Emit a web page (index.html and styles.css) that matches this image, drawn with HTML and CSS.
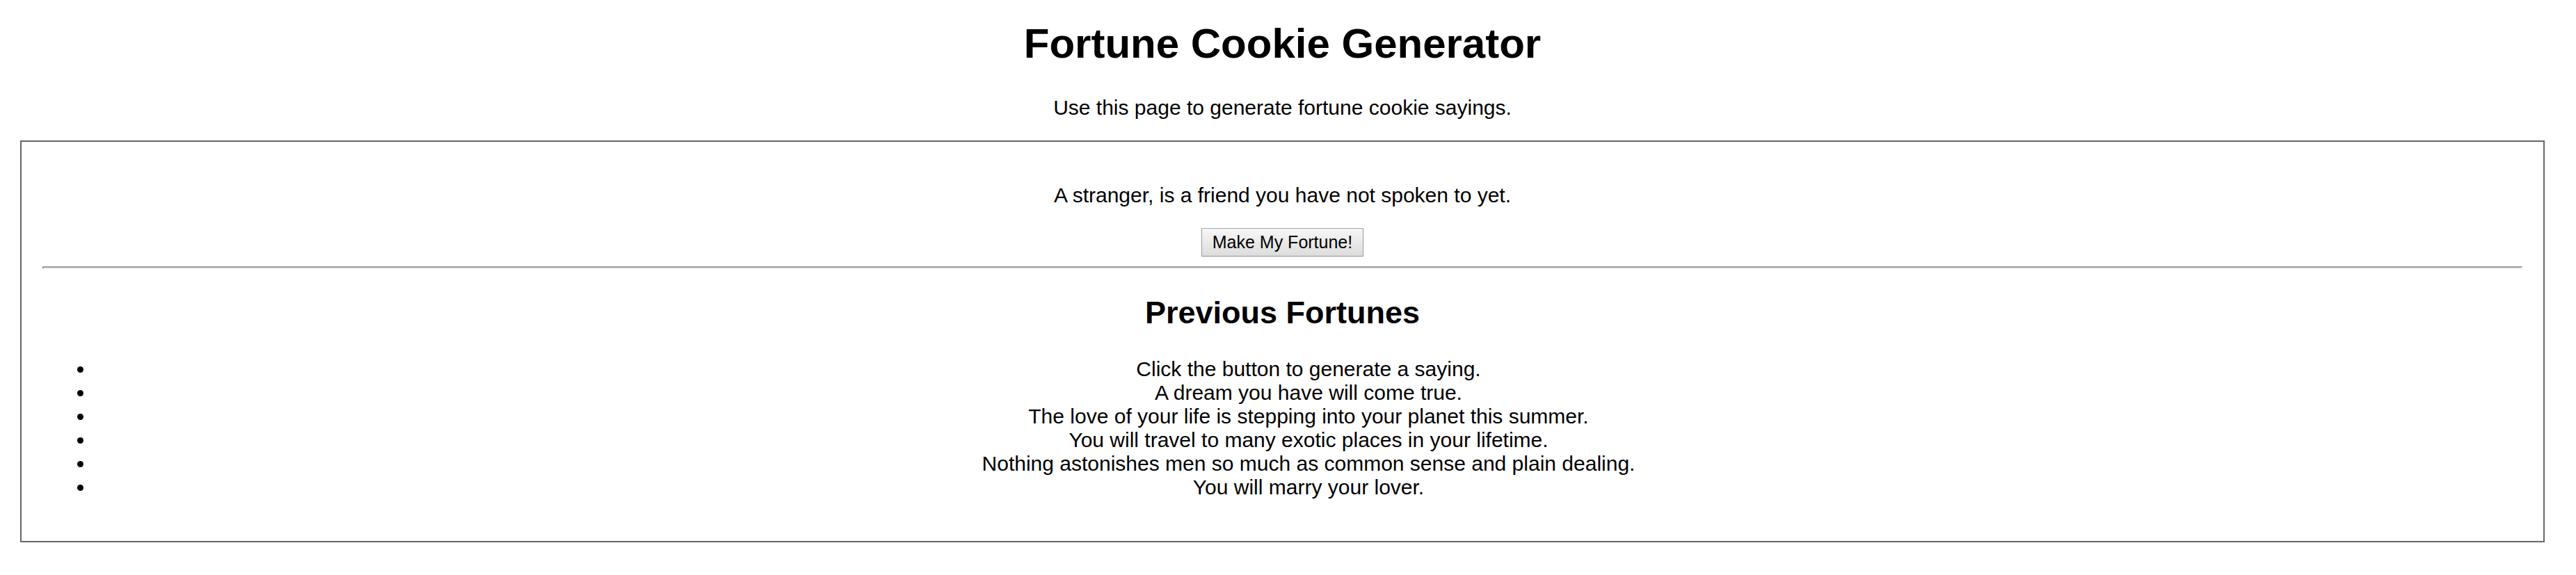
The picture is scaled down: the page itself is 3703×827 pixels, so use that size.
FILE: index.html
```
<!DOCTYPE html>
<html lang="en">
<head>
<meta charset="utf-8">
<title>Fortune Cookie Generator</title>
<link rel="stylesheet" href="styles.css">
</head>
<body>
<h1 class="title">Fortune Cookie Generator</h1>
<p class="intro">Use this page to generate fortune cookie sayings.</p>
<main class="panel">
<p class="fortune">A stranger, is a friend you have not spoken to yet.</p>
<button class="make-button" type="button">Make My Fortune!</button>
<hr class="divider">
<h2 class="subtitle">Previous Fortunes</h2>
<ul class="fortune-list">
<li>Click the button to generate a saying.</li>
<li>A dream you have will come true.</li>
<li>The love of your life is stepping into your planet this summer.</li>
<li>You will travel to many exotic places in your lifetime.</li>
<li>Nothing astonishes men so much as common sense and plain dealing.</li>
<li>You will marry your lover.</li>
</ul>
</main>
</body>
</html>
```
FILE: styles.css
```
body {
  margin: 0 45px 0 29px;
  font: 30px/34px "Liberation Sans", Arial, sans-serif;
  text-align: center;
  color: #000;
  background: #fff;
}
.title {
  margin: 28px 0 40px;
  font-size: 60px;
  line-height: 70px;
}
.intro {
  margin: 0 0 30px;
}
.panel {
  border: 2px solid #666;
  padding: 60px 30px;
}
.fortune {
  margin: 0 0 30px;
}
.make-button {
  display: block;
  margin: 0 auto 14px;
  padding: 4px 15px;
  border: 1px solid;
  border-color: #a6a6a6 #999 #8e8e8e;
  border-radius: 1px;
  background: linear-gradient(#f6f6f6, #dddddd);
  font: 25px/31px "Liberation Sans", Arial, sans-serif;
  color: #000;
}
.divider {
  margin: 0 0 37px;
  border: 2px solid;
  border-color: #999 #eee #eee #999;
}
.subtitle {
  margin: 0 0 38px;
  font-size: 45px;
  line-height: 52px;
}
.fortune-list {
  margin: 0;
  padding-left: 75px;
}
```
